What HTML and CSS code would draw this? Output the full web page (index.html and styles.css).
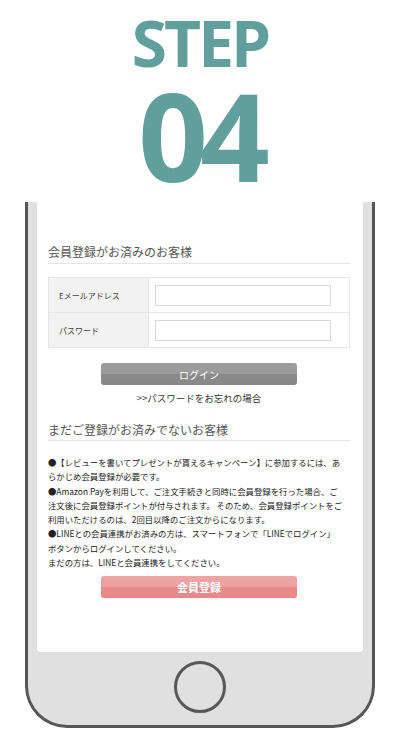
FILE: index.html
```html
<!DOCTYPE html>
<html lang="ja">

<head>
    <meta charset="UTF-8">
    <meta name="viewport" content="width=device-width, initial-scale=1.0">
    <title>STEP 04</title>
    <link rel="stylesheet" href="styles.css">
</head>

<body>
    <div class="step">
        <div class="step-label">STEP</div>
        <div class="step-num">04</div>
    </div>
    <div class="phone">
        <div class="screen">
            <h2 class="title">会員登録がお済みのお客様</h2>
            <div class="login-table">
                <div class="row">
                    <div class="label">Eメールアドレス</div>
                    <div class="field"><input type="text"></div>
                </div>
                <div class="row">
                    <div class="label">パスワード</div>
                    <div class="field"><input type="password"></div>
                </div>
            </div>
            <button class="btn btn-login">ログイン</button>
            <p class="forgot">&gt;&gt;パスワードをお忘れの場合</p>
            <h2 class="title title-new">まだご登録がお済みでないお客様</h2>
            <p class="note">
                ●【レビューを書いてプレゼントが貰えるキャンペーン】に参加するには、あ<br>
                らかじめ会員登録が必要です。<br>
                ●Amazon Payを利用して、ご注文手続きと同時に会員登録を行った場合、ご<br>
                注文後に会員登録ポイントが付与されます。 そのため、会員登録ポイントをご<br>
                利用いただけるのは、2回目以降のご注文からになります。<br>
                ●LINEとの会員連携がお済みの方は、スマートフォンで「LINEでログイン」<br>
                ボタンからログインしてください。<br>
                まだの方は、LINEと会員連携をしてください。
            </p>
            <button class="btn btn-register">会員登録</button>
        </div>
        <div class="home">
            <div class="home-button"></div>
        </div>
    </div>
</body>

</html>
```

FILE: styles.css
```css
body {
    margin: 0;
    padding: 0;
    background-color: #fff;
    font-family: "Noto Sans CJK JP", sans-serif;
    color: #333;
}

.step {
    padding-top: 11px;
    text-align: center;
    color: #609f9c;
    font-family: "Open Sans", sans-serif;
    font-weight: 700;
}

.step-label {
    font-size: 64px;
    line-height: 64px;
    letter-spacing: -3px;
}

.step-num {
    margin-top: -1px;
    font-size: 122px;
    line-height: 122px;
    letter-spacing: -8px;
}

.phone {
    width: 326px;
    margin: 6px auto 0;
    padding: 0 9px;
    background-color: #e0e0e0;
    border: 3px solid #575757;
    border-top: none;
    border-radius: 0 0 42px 42px;
}

.screen {
    height: 450px;
    box-sizing: border-box;
    padding: 41px 13px 0 11px;
    background-color: #fff;
    border-radius: 0 0 4px 4px;
}

.title {
    margin: 0;
    padding-bottom: 2px;
    font-size: 12px;
    line-height: 18px;
    font-weight: 400;
    color: #555;
    border-bottom: 1px solid #e6e6e6;
}

.login-table {
    margin-top: 13px;
    border: 1px solid #e6e6e6;
}

.row {
    display: flex;
    height: 34px;
}

.row + .row {
    border-top: 1px solid #e6e6e6;
}

.label {
    width: 89px;
    padding-left: 10px;
    display: flex;
    align-items: center;
    background-color: #f2f2f2;
    border-right: 1px solid #e6e6e6;
    font-size: 8px;
    color: #444;
}

.field {
    padding-left: 6px;
    display: flex;
    align-items: center;
}

.field input {
    width: 176px;
    height: 21px;
    box-sizing: border-box;
    margin: 0;
    border: 1px solid #d8d8d8;
    border-radius: 0;
}

.btn {
    display: block;
    width: 196px;
    height: 22px;
    margin: 15px auto 0;
    padding: 0;
    border: none;
    border-radius: 3px;
    color: #fff;
    font-family: "Noto Sans CJK JP", sans-serif;
    cursor: pointer;
}

.btn-login {
    font-size: 10px;
    background: linear-gradient(#9b9b9b 0, #9b9b9b 50%, #8a8a8a 50%, #888 100%);
}

.forgot {
    margin: 6px 0 0;
    text-align: center;
    font-size: 9.5px;
    line-height: 14px;
    color: #333;
}

.title-new {
    margin-top: 16px;
    padding-bottom: 1px;
}

.note {
    margin: 14px 0 0;
    font-size: 8.4px;
    line-height: 14.3px;
    color: #222;
    white-space: nowrap;
}

.btn-register {
    margin-top: 7px;
    font-size: 11px;
    font-weight: 700;
    background: linear-gradient(#eea4a4 0, #eda0a0 50%, #e88b8b 50%, #e68888 100%);
}

.home {
    height: 73px;
    display: flex;
    justify-content: center;
}

.home-button {
    width: 46px;
    height: 46px;
    margin-top: 9px;
    border: 3px solid #585858;
    border-radius: 50%;
}
```
